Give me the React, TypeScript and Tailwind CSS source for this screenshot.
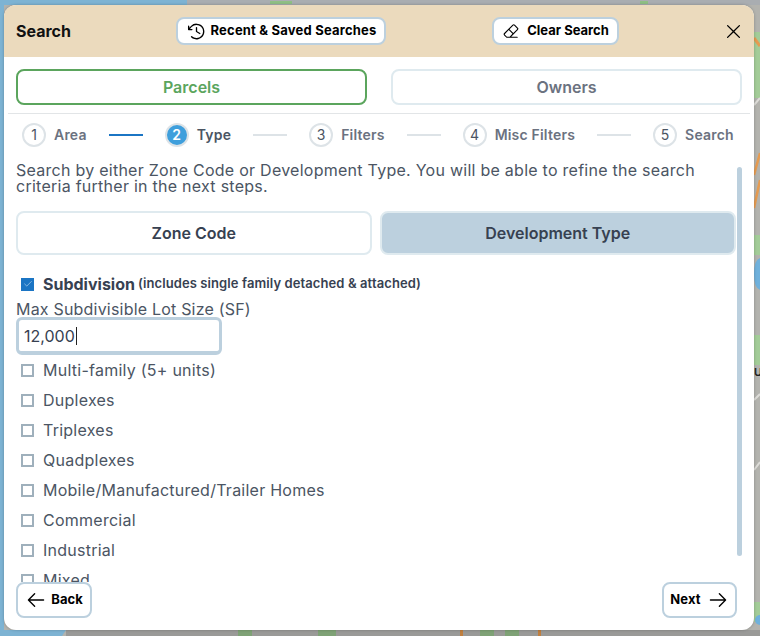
import React from 'react';
import { Check } from 'lucide-react';
import { PiArrowLeft, PiArrowRight, PiClockCounterClockwise, PiEraser, PiX } from 'react-icons/pi';

const font = '[font-family:Inter,"Noto_Sans",sans-serif]';

interface Step {
  num: number;
  label: string;
  active?: boolean;
}

const steps: Step[] = [
  { num: 1, label: 'Area' },
  { num: 2, label: 'Type', active: true },
  { num: 3, label: 'Filters' },
  { num: 4, label: 'Misc Filters' },
  { num: 5, label: 'Search' },
];

const types = [
  'Multi-family (5+ units)',
  'Duplexes',
  'Triplexes',
  'Quadplexes',
  'Mobile/Manufactured/Trailer Homes',
  'Commercial',
  'Industrial',
  'Mixed',
];

const MapBackground = () => (
  <svg className="absolute inset-0" width="760" height="636" viewBox="0 0 760 636">
    <rect width="760" height="636" fill="#b3b3ae" />
    <rect x="187" y="0" width="573" height="5" fill="#a9adb1" />
    <path d="M0 0H187V5H4V630H66L62 636H0Z" fill="#7db3d3" />
    <rect x="66" y="630" width="694" height="6" fill="#9a9a98" />
    <rect x="270" y="1" width="22" height="3" fill="#8fbf85" />
    <rect x="640" y="1" width="8" height="3" fill="#8fbf85" />
    <rect x="754" y="32" width="6" height="66" fill="#a3cc98" />
    <rect x="754" y="235" width="6" height="20" fill="#a3cc98" />
    <rect x="754" y="335" width="6" height="30" fill="#a3cc98" />
    <rect x="754" y="602" width="6" height="20" fill="#a3cc98" />
    <path d="M760 153L754 175M760 180L754 208" stroke="#e69b50" strokeWidth="2.5" />
    <path d="M754 38L760 46" stroke="#e69b50" strokeWidth="3" />
    <path d="M760 258V290Q754 288 754 274Q754 260 760 258Z" fill="#6fb1dc" />
    <path d="M754 105L760 98M754 400L760 394M754 470L760 462" stroke="#dddcd8" strokeWidth="2" />
    <circle cx="760" cy="620" r="5" fill="#6fb1dc" />
    <rect x="238" y="630" width="14" height="6" fill="#7fa276" />
    <rect x="318" y="630" width="18" height="6" fill="#7fa276" />
    <rect x="480" y="630" width="14" height="6" fill="#7fa276" />
    <rect x="505" y="630" width="14" height="6" fill="#7fa276" />
    <rect x="460" y="630" width="3" height="6" fill="#c07f3f" />
    <rect x="538" y="630" width="3" height="6" fill="#c07f3f" />
  </svg>
);

const Box = ({ checked }: { checked?: boolean }) =>
  checked ? (
    <span className="flex h-[13px] w-[13px] shrink-0 items-center justify-center bg-[#1b75c4]">
      <Check size={10} strokeWidth={1.5} className="text-[#c9dff2]" />
    </span>
  ) : (
    <span className="h-[13px] w-[13px] shrink-0 border-2 border-[#9fb0bc] bg-white" />
  );

export default function App() {
  return (
    <div className={`relative h-[636px] w-[760px] overflow-hidden ${font}`}>
      <MapBackground />
      <span className="absolute left-[754px] top-[365px] text-[11px] font-semibold leading-[14px] text-[#222]">U</span>

      <div className="absolute left-[4px] top-[5px] flex h-[625px] w-[750px] flex-col overflow-hidden rounded-xl bg-white shadow-[0_0_3px_rgba(0,0,0,0.25)]">
        <header className="flex h-[52px] shrink-0 items-center bg-[#ebdabd] pl-3 pr-[10px]">
          <span className="w-[160px] text-[16px] font-bold text-[#111]">Search</span>
          <button className="flex h-[28px] w-[210px] items-center justify-center gap-[4px] rounded-lg border-2 border-[#bcd0de] bg-white text-[13px] font-bold tracking-[0.2px] text-black">
            <PiClockCounterClockwise size={21} />
            Recent &amp; Saved Searches
          </button>
          <button className="ml-[106px] flex h-[28px] w-[127px] items-center justify-center gap-[7px] rounded-lg border-2 border-[#bcd0de] bg-white text-[13px] font-bold text-black">
            <PiEraser size={18} />
            Clear Search
          </button>
          <PiX size={21} className="ml-auto text-black" />
        </header>

        <div className="mx-3 mt-3 flex gap-6">
          <div className="flex h-[36px] w-[351px] items-center justify-center rounded-lg border-2 border-[#5ba55d] text-[16px] font-semibold text-[#5ba55d]">
            Parcels
          </div>
          <div className="flex h-[36px] w-[351px] items-center justify-center rounded-lg border-2 border-[#dfeaef] text-[16px] font-semibold text-[#6b7280]">
            Owners
          </div>
        </div>

        <div className="mx-1 mt-2 flex h-[42px] shrink-0 items-center border-t border-[#e2e5e7] pl-[14px]">
          {steps.map((s, i) => (
            <React.Fragment key={s.num}>
              {i > 0 && (
                <div className={`mx-[22px] h-[2px] w-[34px] shrink-0 ${s.active ? 'bg-[#1b75c4]' : 'bg-[#dde3e7]'}`} />
              )}
              <div className="flex items-center gap-2">
                <span
                  className={`flex h-[24px] w-[24px] items-center justify-center rounded-full border-2 text-[14px] ${
                    s.active ? 'border-[#dde3e7] bg-[#3f9fdc] font-semibold text-white' : 'border-[#dde3e7] text-[#4b5563]'
                  }`}
                >
                  {s.num}
                </span>
                <span className={`text-[14px] font-semibold tracking-[0.2px] ${s.active ? 'text-[#4b5563]' : 'text-[#6b7280]'}`}>{s.label}</span>
              </div>
            </React.Fragment>
          ))}
        </div>

        <div className="flex min-h-0 flex-1 pl-3 pr-3">
          <div className="min-w-0 flex-1 overflow-hidden">
            <p className="mt-[7px] text-[16px] leading-4 tracking-[0.26px] text-[#4b5563]">
              Search by either Zone Code or Development Type. You will be able to refine the search criteria further in the next steps.
            </p>
            <div className="mt-[17px] flex gap-2">
              <div className="flex h-[44px] w-[356px] items-center justify-center rounded-lg border-2 border-[#dfeaef] text-[16px] font-semibold text-[#374151]">
                Zone Code
              </div>
              <div className="flex h-[44px] w-[357px] items-center justify-center rounded-lg border-2 border-[#dfeaef] bg-[#bcd0de] text-[16px] font-semibold text-[#374151]">
                Development Type
              </div>
            </div>
            <div className="ml-[5px] mt-[20px] flex h-[18px] items-center gap-[9px] text-[#374151]">
              <Box checked />
              <span className="text-[16px] font-bold">Subdivision</span>
              <span className="-ml-[6px] text-[13px] font-semibold tracking-[0.1px]">(includes single family detached &amp; attached)</span>
            </div>
            <div className="mt-[9px] text-[16px] leading-[14px] tracking-[0.2px] text-[#4b5563]">Max Subdivisible Lot Size (SF)</div>
            <div className="mt-[1px] flex h-[38px] w-[206px] items-center rounded-md border-[3px] border-b-4 border-[#bcd0de] pl-[5px] text-[16px] text-[#374151]">
              12,000<span className="ml-px h-[18px] w-px bg-[#222]" />
            </div>
            <div className="ml-[5px]">
              {types.map((t) => (
                <div key={t} className="flex h-[30px] items-center gap-[9px] text-[16px] tracking-[0.25px] text-[#4b5563]">
                  <Box />
                  {t}
                </div>
              ))}
            </div>
          </div>
          <div className="ml-[1px] mt-[12px] h-[389px] w-[5px] shrink-0 rounded-full bg-[#bcd0de]" />
        </div>

        <footer className="flex h-[48px] shrink-0 items-start justify-between pl-3 pr-[17px]">
          <button className="flex h-[36px] w-[76px] items-center justify-center gap-[4px] rounded-lg border-2 border-[#bcd0de] bg-white text-[13px] font-bold text-black">
            <PiArrowLeft size={22} />
            Back
          </button>
          <button className="flex h-[36px] w-[75px] items-center justify-center gap-[6px] rounded-lg border-2 border-[#bcd0de] bg-white text-[13px] font-bold tracking-[0.2px] text-black">
            Next
            <PiArrowRight size={22} />
          </button>
        </footer>
      </div>
    </div>
  );
}
